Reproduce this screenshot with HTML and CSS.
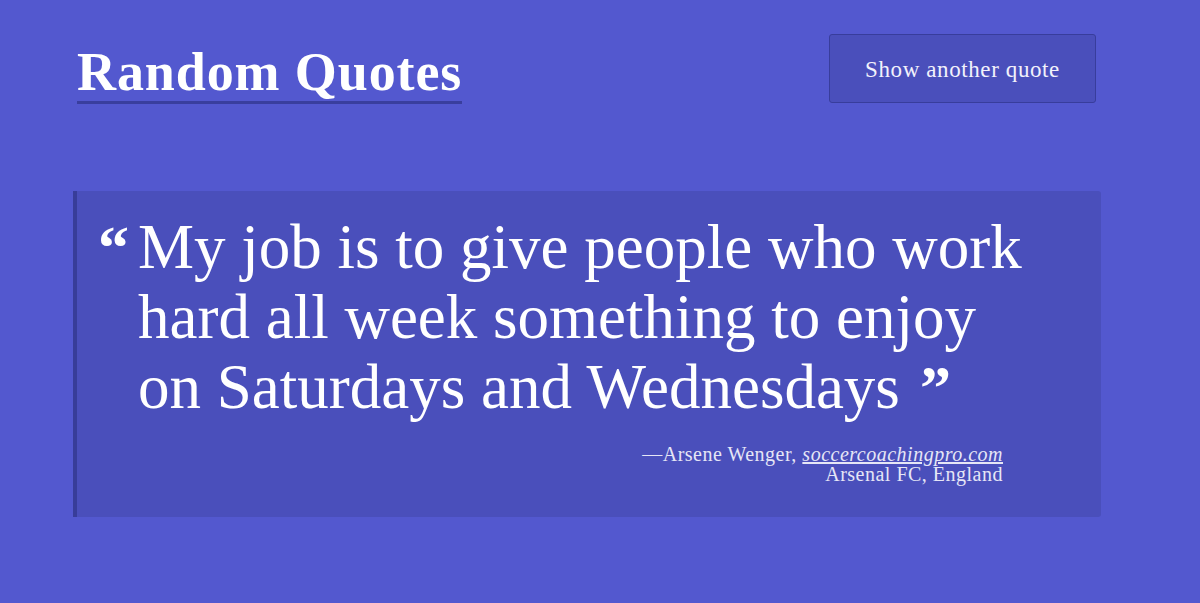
FILE: index.html
```html
<!DOCTYPE html>
<html lang="en">
<head>
    <meta charset="UTF-8">
    <meta name="viewport" content="width=device-width, initial-scale=1.0">
    <title>Random Quotes</title>
    <link rel="stylesheet" href="styles.css">
</head>
<body>
    <div class="quotes-page">
        <header class="quotes-header">
            <h1 class="site-title">Random Quotes</h1>
            <button id="next-quote-btn" class="quote-button">Show another quote</button>
        </header>

        <blockquote class="quote-card">
            <p class="quote-text">My job is to give people who work hard all week something to enjoy on Saturdays and Wednesdays</p>
            <footer class="quote-source">
                &mdash;Arsene Wenger, <cite><a href="#">soccercoachingpro.com</a></cite><br>
                Arsenal FC, England
            </footer>
        </blockquote>
    </div>
</body>
</html>
```

FILE: styles.css
```css
body {
    margin: 0;
    min-height: 100vh;
    background: #5358cf;
    font-family: 'Liberation Serif', 'DejaVu Serif', serif;
    color: #fff;
    overflow: hidden;
}

.quotes-page {
    padding: 34px 99px 0 73px;
}

.quotes-header {
    display: flex;
    justify-content: space-between;
    align-items: flex-start;
}

.site-title {
    margin: 9px 0 0 4px;
    font-size: 54px;
    font-weight: bold;
    letter-spacing: 0.9px;
    line-height: 58px;
    border-bottom: 3px solid #393e9e;
}

.quote-button {
    width: 267px;
    height: 69px;
    margin-right: 5px;
    background: #4a4fbb;
    border: 1px solid #383d9c;
    border-radius: 3px;
    color: #f2f2fb;
    font-family: inherit;
    font-size: 23px;
    letter-spacing: 0.6px;
    padding-top: 3px;
    cursor: pointer;
}

.quote-card {
    margin: 87px 0 0;
    padding: 21px 20px 33px 21px;
    background: #4a4fbb;
    border-left: 4px solid #383d99;
    border-radius: 0 3px 3px 0;
}

.quote-text {
    margin: 0;
    padding-left: 40px;
    text-indent: -40px;
    max-width: 905px;
    font-size: 63px;
    line-height: 70px;
}

/* big bold marks sit on the baseline without growing the line */
.quote-text::before,
.quote-text::after {
    font-size: 62px;
    font-weight: bold;
    line-height: 0;
}

.quote-text::before {
    content: "\201C";
    display: inline-block;
    width: 40px;
    text-indent: 0;
}

.quote-text::after {
    content: "\201D";
    margin-left: 20px;
}

.quote-source {
    margin-top: 22px;
    padding-right: 78px;
    text-align: right;
    font-size: 20px;
    letter-spacing: 0.5px;
    line-height: 20px;
    color: #e6e6f6;
}

.quote-source a {
    color: inherit;
}
```
